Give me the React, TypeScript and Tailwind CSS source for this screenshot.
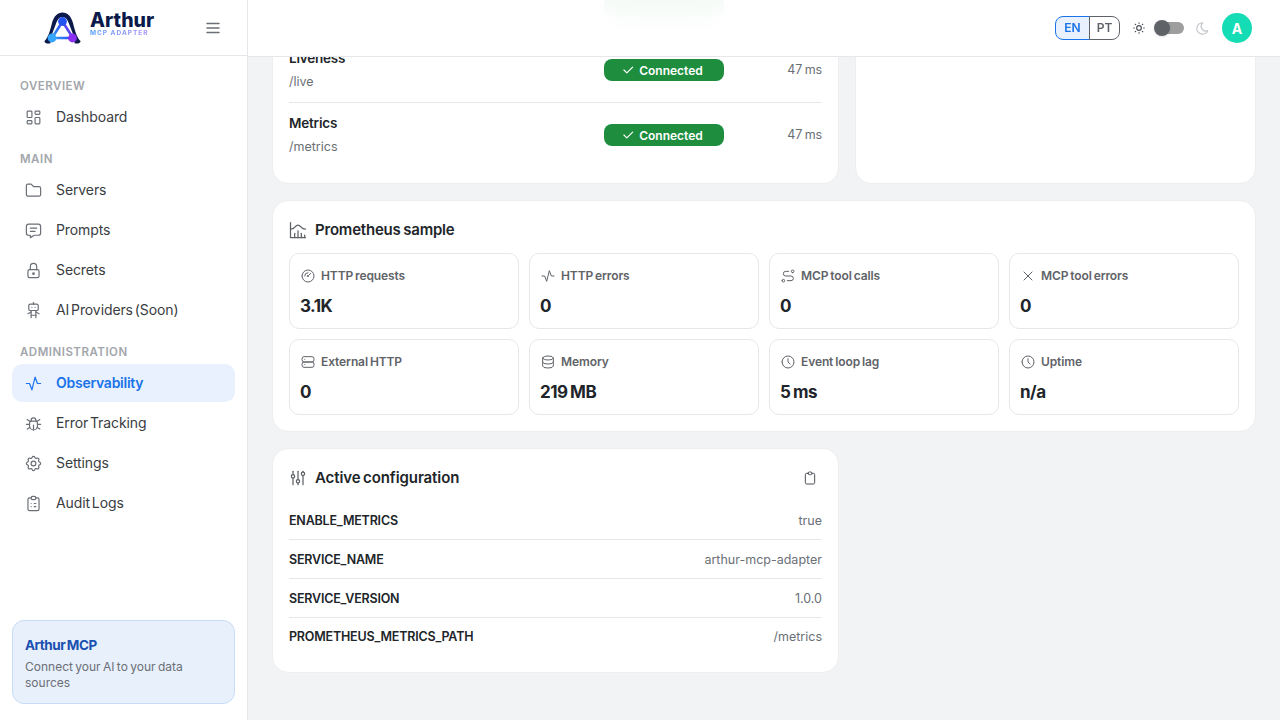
import React from "react";
import {
  TbActivity,
  TbAdjustments,
  TbBug,
  TbChartHistogram,
  TbCheck,
  TbClipboard,
  TbClipboardList,
  TbClock,
  TbDatabase,
  TbFolder,
  TbGauge,
  TbLayoutDashboard,
  TbLock,
  TbMenu2,
  TbMessage,
  TbMoon,
  TbRobot,
  TbRoute,
  TbServer,
  TbSettings,
  TbSun,
  TbX,
} from "react-icons/tb";

const navSections = [
  { label: "OVERVIEW", items: [{ name: "Dashboard", icon: TbLayoutDashboard }] },
  {
    label: "MAIN",
    items: [
      { name: "Servers", icon: TbFolder },
      { name: "Prompts", icon: TbMessage },
      { name: "Secrets", icon: TbLock },
      { name: "AI Providers (Soon)", icon: TbRobot },
    ],
  },
  {
    label: "ADMINISTRATION",
    items: [
      { name: "Observability", icon: TbActivity, active: true },
      { name: "Error Tracking", icon: TbBug },
      { name: "Settings", icon: TbSettings },
      { name: "Audit Logs", icon: TbClipboardList },
    ],
  },
];

const endpoints = [
  { name: "Liveness", path: "/live" },
  { name: "Metrics", path: "/metrics" },
];

const stats = [
  { label: "HTTP requests", value: "3.1K", icon: TbGauge },
  { label: "HTTP errors", value: "0", icon: TbActivity },
  { label: "MCP tool calls", value: "0", icon: TbRoute },
  { label: "MCP tool errors", value: "0", icon: TbX },
  { label: "External HTTP", value: "0", icon: TbServer },
  { label: "Memory", value: "219 MB", icon: TbDatabase },
  { label: "Event loop lag", value: "5 ms", icon: TbClock },
  { label: "Uptime", value: "n/a", icon: TbClock },
];

const config = [
  { key: "ENABLE_METRICS", value: "true" },
  { key: "SERVICE_NAME", value: "arthur-mcp-adapter" },
  { key: "SERVICE_VERSION", value: "1.0.0" },
  { key: "PROMETHEUS_METRICS_PATH", value: "/metrics" },
];

function Logo() {
  return (
    <div className="flex items-center gap-[9px]">
      <svg width="37" height="32" viewBox="0 0 37 32" className="shrink-0">
        <defs>
          <linearGradient id="tri" x1="0" y1="1" x2="1" y2="0.4">
            <stop offset="0" stopColor="#38a9fb" />
            <stop offset="0.55" stopColor="#2c5cf5" />
            <stop offset="1" stopColor="#8a35f0" />
          </linearGradient>
        </defs>
        <path
          d="M0.5 29 C4 26 6 19 8 11 C10 4 13.5 0.5 18.5 0.5 C23.5 0.5 27 4 29 11 C31 19 33 26 36.5 29 C36.8 31 33 32.5 30 31 L7 31 C4 32.5 0.2 31 0.5 29 Z"
          fill="#0b1a4b"
        />
        <path d="M18.5 5 C14.5 5 13 9 11.5 13 L6.5 26 L6.5 31.5 L30.5 31.5 L30.5 26 L25.5 13 C24 9 22.5 5 18.5 5 Z" fill="#ffffff" />
        <path d="M18.5 9.5 L8 26 L29 26 Z" fill="none" stroke="url(#tri)" strokeWidth="2.6" strokeLinejoin="round" />
        <circle cx="18.5" cy="9.5" r="4.4" fill="#2553f0" />
        <circle cx="8" cy="26" r="4.4" fill="#35a6fb" />
        <circle cx="28.5" cy="26" r="4.4" fill="#8b2ff2" />
      </svg>
      <div className="flex flex-col mb-[9px]">
        <span className="text-[19.5px] leading-[18px] font-extrabold text-[#0b1a4b] [word-spacing:0]">Arthur</span>
        <span className="mt-[1px] -mb-[1px] w-fit text-[6.5px] leading-[7px] font-bold tracking-[1px] [word-spacing:0] bg-gradient-to-r from-[#4f9cf9] to-[#a78bfa] bg-clip-text text-transparent">
          MCP ADAPTER
        </span>
      </div>
    </div>
  );
}

function Sidebar() {
  return (
    <aside className="flex flex-col w-[248px] h-full shrink-0 bg-white border-r border-[#e5e7eb]">
      <div className="flex items-center h-[56px] pl-[44px] pr-[25px] justify-between border-b border-[#e5e7eb]">
        <Logo />
        <TbMenu2 size={18} className="text-[#6b6f76]" />
      </div>
      <nav className="flex flex-col px-3 pt-[21px]">
        {navSections.map((section) => (
          <div key={section.label} className="flex flex-col mb-[14px]">
            <div className="h-[18px] mb-[3px] pl-2 text-[11.5px] leading-[18px] font-semibold tracking-[0.5px] text-[#a3a6ab]">
              {section.label}
            </div>
            <div className="flex flex-col gap-[2px]">
              {section.items.map((item) => {
                const Icon = item.icon;
                return (
                  <div
                    key={item.name}
                    className={
                      item.active
                        ? "flex items-center h-[38px] pl-3 gap-[13px] rounded-[10px] bg-[#e8f1fd] text-[#1a73e8] font-semibold"
                        : "flex items-center h-[38px] pl-3 gap-[13px] rounded-[10px] text-[#3a3d42] font-normal"
                    }
                  >
                    <Icon size={19} className={item.active ? "text-[#1a73e8]" : "text-[#6b6f76]"} strokeWidth={1.5} />
                    <span
                      className={
                        item.active
                          ? "mb-[2px] text-[14px] tracking-[-0.25px]"
                          : "mb-[2px] text-[14px] tracking-[-0.1px] [word-spacing:-2px]"
                      }
                    >
                      {item.name}
                    </span>
                  </div>
                );
              })}
            </div>
          </div>
        ))}
      </nav>
      <div className="mt-auto mx-3 mb-4 h-[84px] px-3 pt-[14px] rounded-xl border border-[#c9dbf8] bg-[#e8f0fc]">
        <div className="text-[13.5px] leading-[20px] tracking-[-0.5px] font-bold text-[#1a50b0]">Arthur MCP</div>
        <div className="mt-[4px] text-[12px] leading-[16px] text-[#6b6f76]">Connect your AI to your data sources</div>
      </div>
    </aside>
  );
}

function Header() {
  return (
    <header className="absolute top-0 inset-x-0 h-[57px] flex items-center justify-end pr-[28px] bg-white/95 backdrop-blur-lg border-b border-[#e5e7eb]">
      <div className="flex h-[24px] text-[12px] font-semibold">
        <div className="flex items-center justify-center w-[35px] rounded-l-lg border border-[#1a73e8] bg-[#e8f1fd] text-[#1a73e8]">EN</div>
        <div className="flex items-center justify-center w-[31px] -ml-px rounded-r-lg border border-[#5f6368] text-[#5f6368]">PT</div>
      </div>
      <TbSun size={14} className="ml-[12px] text-[#4b4f55]" />
      <div className="relative ml-[9px] w-[29px] h-[12px] rounded-full bg-[#9e9e9e]">
        <div className="absolute -left-[1px] -top-[2px] w-4 h-4 rounded-full bg-[#5f6368] shadow" />
      </div>
      <TbMoon size={15} className="ml-[11px] text-[#c4c7cc]" />
      <div className="ml-[12px] flex items-center justify-center w-[30px] h-[30px] rounded-full bg-[#14dcb4] text-white text-[14px] font-bold">
        A
      </div>
    </header>
  );
}

function EndpointsCard() {
  return (
    <div className="p-4 rounded-2xl bg-white border border-[#eceef0]">
      {/* row scrolled away behind the header, only its blur shows */}
      <div className="flex items-center h-[65px] border-b border-[#e5e7eb]">
        <div className="flex-1" />
        <div className="w-[120px] h-[22px] rounded-lg bg-[#1e8e3e]" />
        <div className="w-[98px]" />
      </div>
      {endpoints.map((ep, i) => (
        <div
          key={ep.name}
          className={
            i < endpoints.length - 1
              ? "flex items-center h-[65px] border-b border-[#e5e7eb]"
              : "flex items-center h-[64px]"
          }
        >
          <div className="flex flex-col flex-1 gap-[5px] pb-[2px]">
            <span className="text-[13.5px] leading-[20px] tracking-[-0.2px] font-semibold text-[#212529]">{ep.name}</span>
            <span className="text-[12.5px] leading-[18px] text-[#6b6f76]">{ep.path}</span>
          </div>
          <div className="flex items-center justify-center gap-[4px] w-[120px] h-[22px] pr-[4px] rounded-lg bg-[#1e8e3e] text-white text-[12px] font-semibold">
            <TbCheck size={14} />
            <span className="mt-[2px]">Connected</span>
          </div>
          <span className="w-[98px] text-right text-[12.5px] tracking-[-0.1px] text-[#6b6f76]">47 ms</span>
        </div>
      ))}
    </div>
  );
}

function StatCard({ stat }: { stat: (typeof stats)[number] }) {
  const Icon = stat.icon;
  return (
    <div className="flex flex-col h-[76px] pl-[10px] pt-[12px] rounded-[10px] border border-[#e5e7eb]">
      <div className="flex items-center gap-[5px] h-[20px]">
        <Icon size={16} strokeWidth={1.5} className="text-[#5f6368]" />
        <span className="text-[12px] tracking-[-0.1px] font-semibold text-[#5f6368]">{stat.label}</span>
      </div>
      <div className="mt-[7px] text-[17px] leading-[26px] tracking-[-0.5px] font-bold text-[#212529]">{stat.value}</div>
    </div>
  );
}

export default function App() {
  return (
    <div className="flex w-[1280px] h-[720px] overflow-hidden bg-[#f1f3f5] [font-family:Inter,sans-serif] [word-spacing:-1px]">
      <Sidebar />
      <main className="relative flex-1 h-full overflow-hidden">
        <Header />
        <div className="flex flex-col gap-4 px-6 -mt-[44px]">
          <div className="grid grid-cols-[567px_1fr] gap-4">
            <EndpointsCard />
            <div className="flex flex-col gap-[14px] pt-[46px] pl-[34px] rounded-2xl bg-white border border-[#eceef0]">
              <div className="w-[24px] h-[8px] bg-[#eceef0]" />
              <div className="ml-[66px] w-[30px] h-[8px] bg-[#eceef0]" />
            </div>
          </div>
          <section className="p-4 rounded-2xl bg-white border border-[#eceef0]">
            <div className="flex items-center gap-[7px] h-[26px] mb-[10px]">
              <TbChartHistogram size={20} strokeWidth={1.5} className="-ml-px text-[#5f6368]" />
              <h2 className="text-[15px] tracking-[-0.2px] font-semibold text-[#212529]">Prometheus sample</h2>
            </div>
            <div className="grid grid-cols-4 gap-[10px]">
              {stats.map((stat) => (
                <StatCard key={stat.label} stat={stat} />
              ))}
            </div>
          </section>
          <section className="w-[567px] p-4 rounded-2xl bg-white border border-[#eceef0]">
            <div className="flex items-center gap-[7px] h-[26px] mb-[10px]">
              <TbAdjustments size={20} strokeWidth={1.5} className="-ml-px text-[#5f6368]" />
              <h2 className="flex-1 text-[15px] tracking-[-0.1px] font-semibold text-[#212529]">Active configuration</h2>
              <TbClipboard size={16} strokeWidth={1.5} className="mr-[4px] text-[#4b4f55]" />
            </div>
            {config.map((row, i) => (
              <div
                key={row.key}
                className={
                  i < config.length - 1
                    ? "flex items-center justify-between h-[39px] pt-[2px] border-b border-[#e5e7eb]"
                    : "flex items-center justify-between h-[38px]"
                }
              >
                <span className="text-[12.5px] tracking-[-0.2px] font-semibold text-[#212529] [word-spacing:0]">{row.key}</span>
                <span className="text-[12.5px] text-[#6b6f76]">{row.value}</span>
              </div>
            ))}
          </section>
        </div>
      </main>
    </div>
  );
}
